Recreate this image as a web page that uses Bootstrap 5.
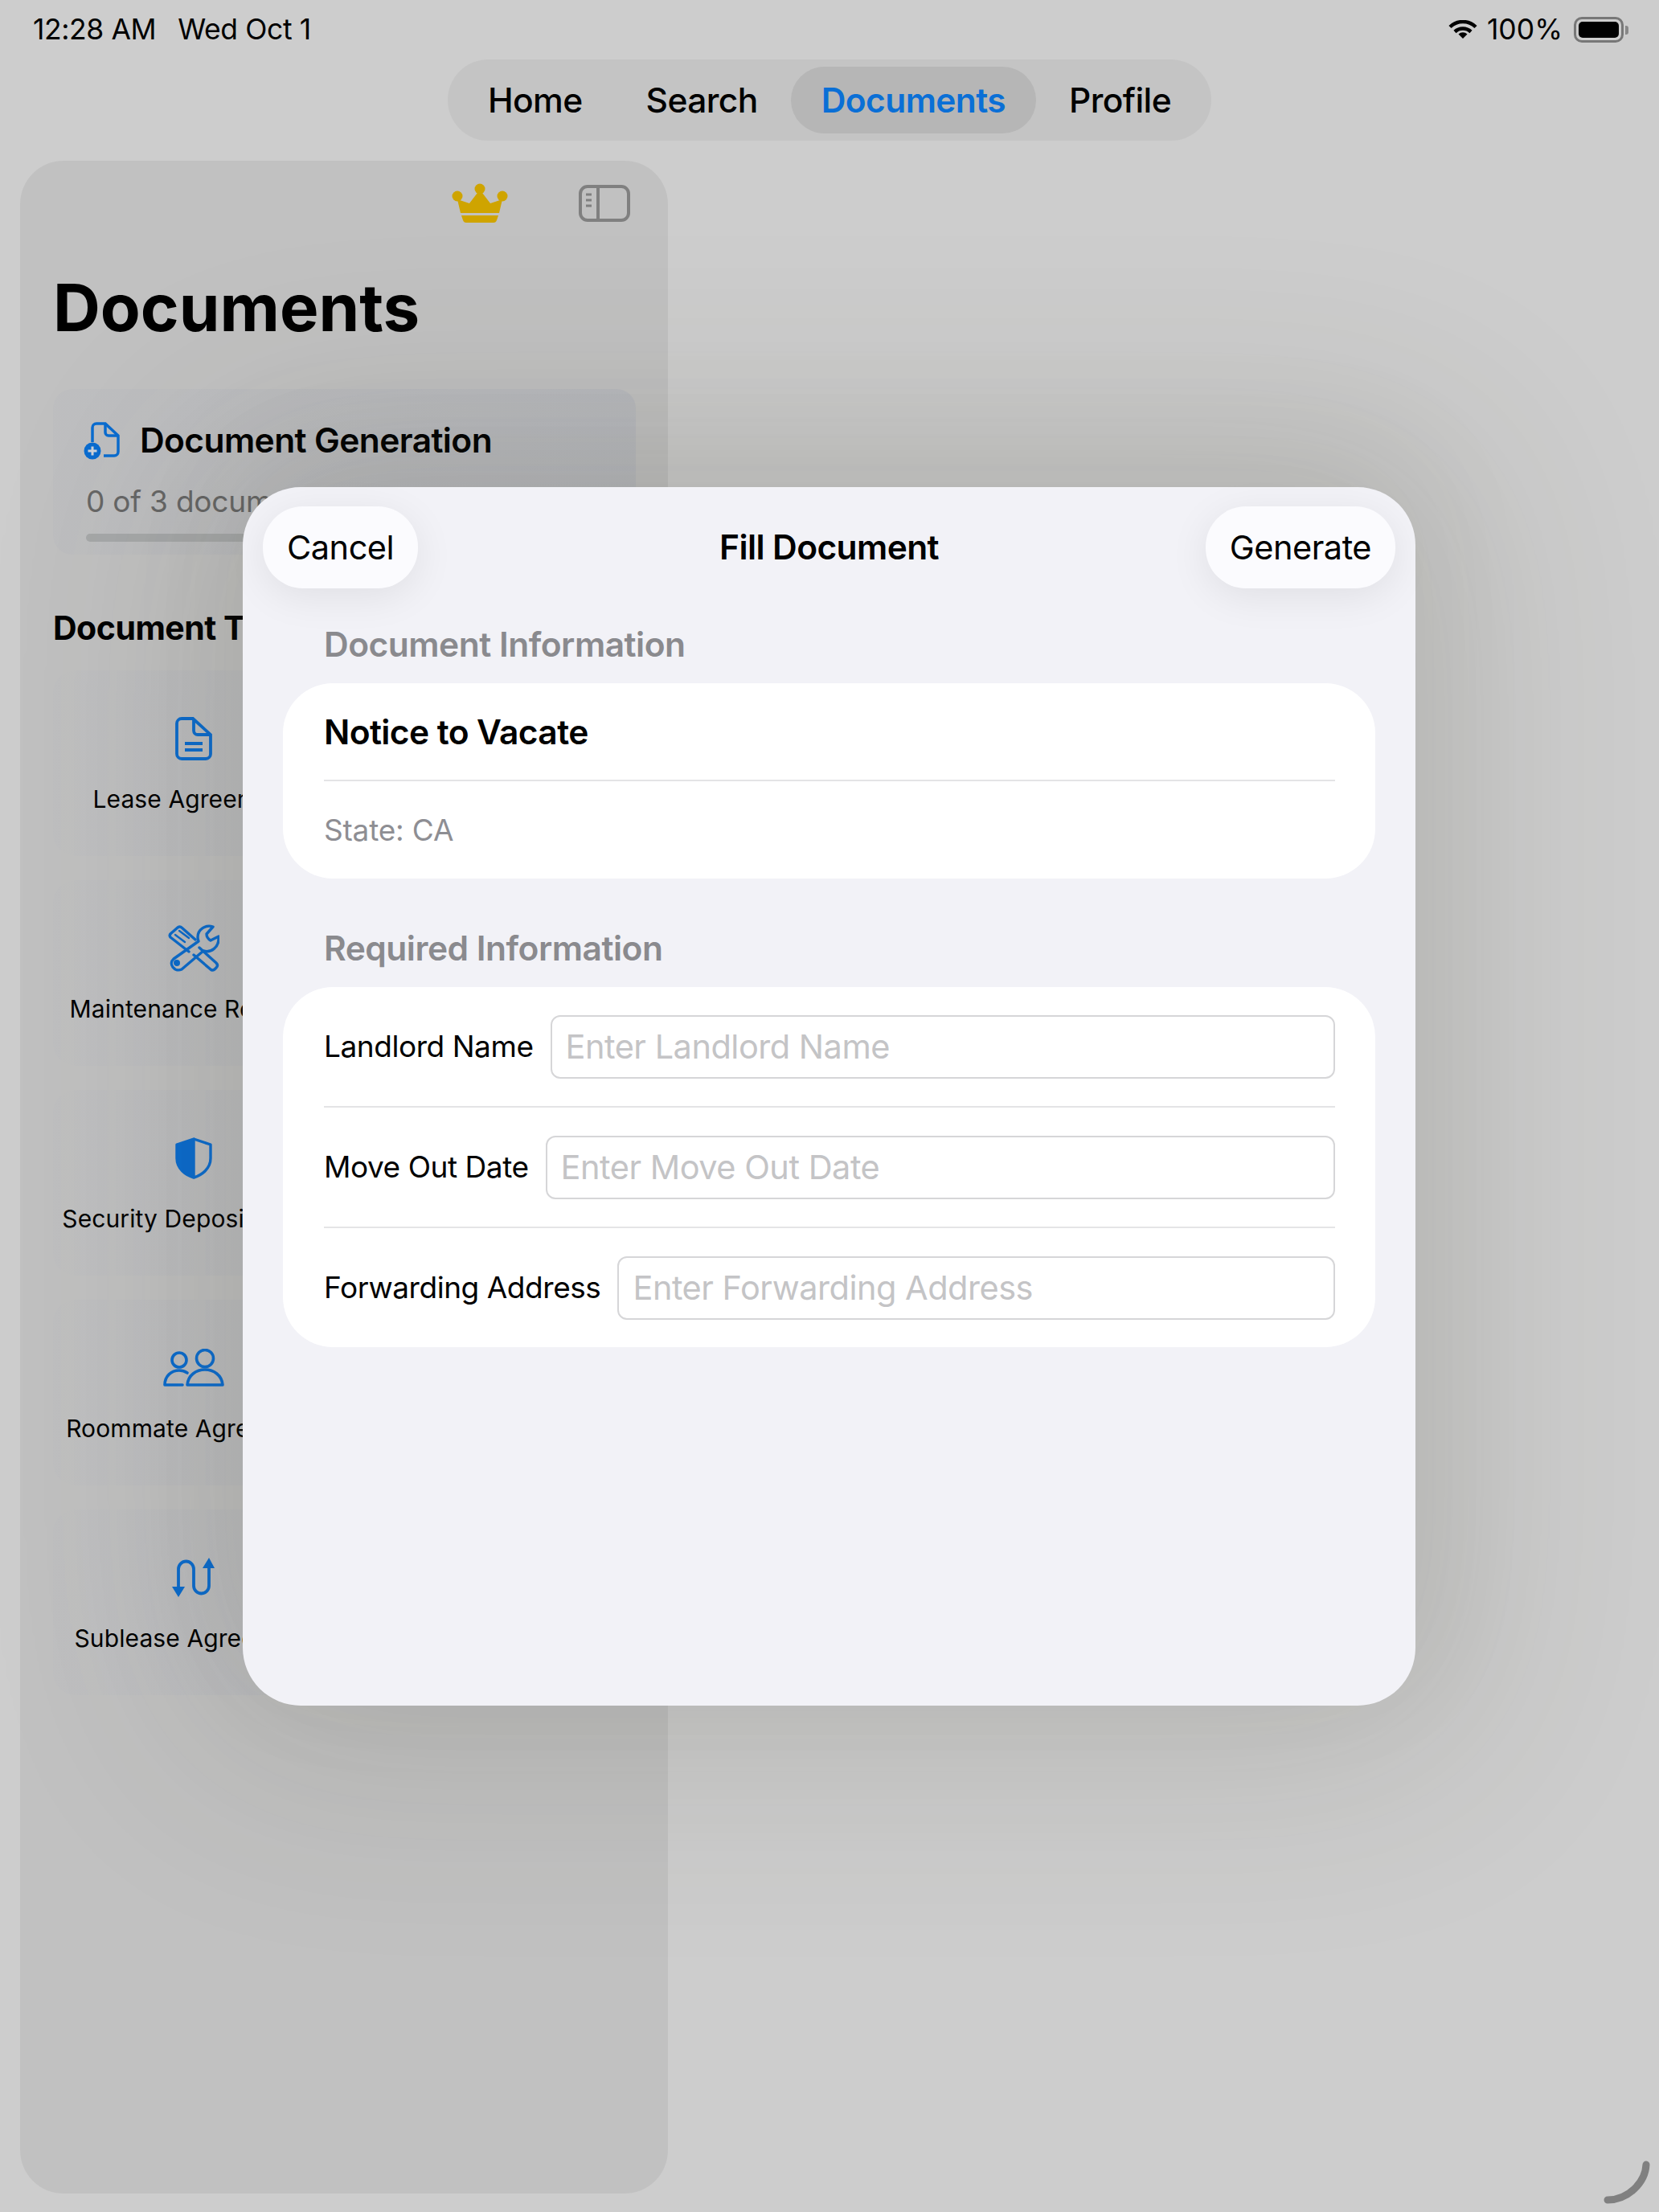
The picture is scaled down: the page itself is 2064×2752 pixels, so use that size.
<!DOCTYPE html>
<html lang="en">
<head>
    <meta charset="UTF-8">
    <meta name="viewport" content="width=device-width, initial-scale=1.0">
    <title>Fill Document</title>
    <link href="https://cdn.jsdelivr.net/npm/bootstrap@5.3.3/dist/css/bootstrap.min.css" rel="stylesheet">
    <style>
        body { background: #cdcdcd; font-family: Inter, "Liberation Sans", sans-serif; color: #000; }
        svg { display: block; flex: none; }

        .screen { width: 2064px; height: 2752px; position: relative; overflow: hidden; background: #cdcdcd; }

        .status-row { height: 74px; padding: 0 38px 0 41px; font-size: 35.500px; line-height: 40px; letter-spacing: -.4px; }
        .status-row .when { gap: 27px; }
        .status-pct { margin: 0 14px 0 12px; letter-spacing: 0; }
        .battery { width: 62px; height: 32px; border: 3px solid #777; border-radius: 10px; padding: 3px; }
        .battery span { display: block; height: 100%; background: #000; border-radius: 5px; }
        .battery-nub { width: 4px; height: 11px; background: #888; border-radius: 0 3px 3px 0; margin-left: 2px; }

        .tab-strip { height: 101px; padding: 9px 12px; background: #c4c4c4; gap: 3px; }
        .tab-strip .nav-link { height: 83px; padding: 0 38px; font-size: 42.500px; font-weight: 500; color: #000; letter-spacing: -.6px; border-radius: 42px; display: flex; align-items: center; }
        .tab-strip .nav-link.active { background: #b6b6b6; color: #0a6fd6; font-weight: 600; }

        .side-panel { width: 806px; height: 2529px; margin: 25px 0 0 25px; background: rgba(0,0,0,.055); border-radius: 54px; padding: 28px 40px 0 41px; }
        .side-tools { gap: 88px; padding-right: 7px; height: 50px; }
        .page-title { font-size: 81.500px; line-height: 90px; font-weight: 700; margin: 60px 0 0; }

        .gen-tile { height: 206px; margin-top: 56px; background: linear-gradient(90deg, rgba(165,170,185,.1), rgba(165,170,185,.3)); border-radius: 24px; padding: 40px 40px 0 36px; }
        .gen-tile h3 { font-size: 42.500px; font-weight: 600; letter-spacing: -.6px; margin: 0; line-height: 48px; }
        .gen-tile p { font-size: 37px; line-height: 44px; color: #666; margin: 30px 0 0 5px; letter-spacing: -.2px; }
        .gen-bar { height: 10px; margin: 18px 0 0 5px; background: #a6a8a9; border-radius: 5px; }

        .types-title { font-size: 41px; font-weight: 700; letter-spacing: -.5px; line-height: 48px; margin: 67px 0 0; }

        .type-list { margin-top: 29px; width: 350px; gap: 30px; }
        .type-tile { height: 231px; background: linear-gradient(90deg, rgba(165,170,190,.05), rgba(165,170,190,.18)); border-radius: 28px; padding-top: 55px; }
        .type-tile .ico { height: 60px; }
        .type-tile span { font-size: 30px; line-height: 36px; margin-top: 27px; white-space: nowrap; letter-spacing: .1px; }

        .sheet { position: absolute; left: 302px; top: 606px; width: 1459px; height: 1516px; background: #f2f2f7; border-radius: 72px; box-shadow: 0 0 300px 80px rgba(60,65,50,.13), 0 -40px 160px rgba(70,75,60,.07); padding: 24px 25px 0; }
        .sheet-head { height: 102px; }
        .sheet-side { flex: 1 1 0; }
        .sheet-head h2 { font-size: 42.500px; font-weight: 600; letter-spacing: -.6px; margin: 0 0 2px; }
        .sheet-btn { height: 102px; padding: 0 30px; background: #fbfbfe; border: 0; border-radius: 50px; font-size: 41.500px; letter-spacing: -.5px; color: #000; box-shadow: 0 10px 50px rgba(0,0,0,.08); }

        .group-label { font-size: 42.500px; line-height: 48px; font-weight: 600; color: #8a8a8e; letter-spacing: -.5px; margin: 46px 0 0 76px; }
        .group-label.second { margin-top: 63px; }
        .group-card { margin: 24px 25px 0; background: #fff; border: 0; border-radius: 62px; padding: 0 50px 0 51px; }
        .rule { height: 2px; background: #e4e4e6; }
        .doc-name { height: 120px; font-size: 42.500px; font-weight: 600; letter-spacing: -.6px; padding-top: 2px; }
        .doc-state { height: 121px; font-size: 37px; color: #8e8e93; letter-spacing: -.2px; }

        .field-row { height: 148px; gap: 21px; font-size: 37px; letter-spacing: -.45px; white-space: nowrap; }
        .field-row .form-control { height: 79px; font-size: 41.500px; padding: 0 17px; border: 2px solid #d6d6d8; border-radius: 12px; letter-spacing: -.5px; }
        .field-row .form-control::placeholder { color: #c4c4c6; opacity: 1; }

        .spin-arc { position: absolute; left: 1990px; top: 2685px; }
    </style>
</head>
<body>
<div class="screen">

    <div class="status-row d-flex justify-content-between align-items-center">
        <div class="when d-flex"><span>12:28 AM</span><span>Wed Oct 1</span></div>
        <div class="d-flex align-items-center">
            <svg width="36" height="24" viewBox="0 0 36 24" fill="none" stroke="#000" stroke-width="4.5">
                <path d="M2 8.500a23 23 0 0 1 32 0"/>
                <path d="M8 14.500a14.500 14.500 0 0 1 20 0"/>
                <path d="M18 23l-5.500-5.500a8 8 0 0 1 11 0z" fill="#000" stroke="none"/>
            </svg>
            <span class="status-pct">100%</span>
            <div class="battery"><span></span></div>
            <div class="battery-nub"></div>
        </div>
    </div>

    <div class="d-flex justify-content-center">
        <ul class="nav nav-pills tab-strip rounded-pill">
            <li class="nav-item"><a class="nav-link" href="#">Home</a></li>
            <li class="nav-item"><a class="nav-link" href="#">Search</a></li>
            <li class="nav-item"><a class="nav-link active" href="#">Documents</a></li>
            <li class="nav-item"><a class="nav-link" href="#">Profile</a></li>
        </ul>
    </div>

    <aside class="side-panel">
        <div class="side-tools d-flex justify-content-end align-items-center">
            <svg width="70" height="50" viewBox="0 0 70 50" fill="#cfa400">
                <circle cx="7" cy="16" r="6.500"/><circle cx="35" cy="7" r="6.500"/><circle cx="63" cy="16" r="6.500"/>
                <path d="M7 20l15 5L35 8l13 17 15-5-4 17H11z"/>
                <path d="M12 40h46l-2 6q-1 3-4 3H18q-3 0-4-3z"/>
            </svg>
            <svg width="64" height="46" viewBox="0 0 64 46" fill="none" stroke="#808080" stroke-width="4">
                <rect x="2" y="2" width="60" height="42" rx="9"/>
                <path d="M24 2v42"/>
                <path d="M9 12h7M9 19h7M9 26h7" stroke-width="3"/>
            </svg>
        </div>

        <h1 class="page-title">Documents</h1>

        <div class="gen-tile">
            <div class="d-flex align-items-center gap-4">
                <svg width="48" height="48" viewBox="0 0 48 48" fill="none" stroke="#0a6cd0" stroke-width="3.5">
                    <path d="M13 26V8a5 5 0 0 1 5-5h11l16 15v20a5 5 0 0 1-5 5H27"/>
                    <path d="M29 3v11a4 4 0 0 0 4 4h12"/>
                    <circle cx="13" cy="37" r="10.500" fill="#0a6cd0" stroke="none"/>
                    <path d="M13 31.500v11M7.500 37h11" stroke="#cfd3da" stroke-width="3"/>
                </svg>
                <h3>Document Generation</h3>
            </div>
            <p>0 of 3 documents used</p>
            <div class="gen-bar"></div>
        </div>

        <h4 class="types-title">Document Types</h4>

        <div class="type-list d-flex flex-column">
            <div class="type-tile d-flex flex-column align-items-center">
                <div class="ico d-flex align-items-center">
                    <svg width="46" height="54" viewBox="0 0 46 54" fill="none" stroke="#0a6cd0" stroke-width="3.8">
                        <path d="M8 2h14l22 20v24a6 6 0 0 1-6 6H8a6 6 0 0 1-6-6V8a6 6 0 0 1 6-6z"/>
                        <path d="M23 2v15a5 5 0 0 0 5 5h16"/>
                        <path d="M12 33h22M12 41h22"/>
                    </svg>
                </div>
                <span>Lease Agreement</span>
            </div>
            <div class="type-tile d-flex flex-column align-items-center">
                <div class="ico d-flex align-items-center">
                    <svg width="64" height="60" viewBox="0 0 64 60" fill="none" stroke="#0a6cd0" stroke-width="3.4" stroke-linejoin="round" stroke-linecap="round">
                        <path d="M26 34L3 16q-2-3 1-5l8-7q3-2 5 0l17 15"/>
                        <path d="M9 13l12 9M14 8l12 9" stroke-width="2.4"/>
                        <path d="M39 29l21 19q3 3 0 6l-2 2q-3 2-5 0L32 38"/>
                        <path d="M56 3c-9-3-19 3-19 13 0 2 .5 4 1 5L7 43c-7 6 1 17 10 13l27-23c10 3 19-5 19-15v-3l-10 5q-5-3-5-8z"/>
                        <circle cx="11" cy="48" r="2.300" fill="#0a6cd0"/>
                    </svg>
                </div>
                <span>Maintenance Request</span>
            </div>
            <div class="type-tile d-flex flex-column align-items-center">
                <div class="ico d-flex align-items-center">
                    <svg width="46" height="52" viewBox="0 0 46 52" fill="none" stroke="#0a6cd0" stroke-width="3.4" stroke-linejoin="round">
                        <path d="M23 2v48C13 47 2 39 2 26V9z" fill="#0a6cd0"/>
                        <path d="M23 2l21 7v17c0 13-11 21-21 24"/>
                    </svg>
                </div>
                <span>Security Deposit Letter</span>
            </div>
            <div class="type-tile d-flex flex-column align-items-center">
                <div class="ico d-flex align-items-center">
                    <svg width="76" height="48" viewBox="0 0 76 48" fill="none" stroke="#0a6cd0" stroke-width="3.6" stroke-linejoin="round" stroke-linecap="round">
                        <circle cx="52" cy="12" r="10.500"/>
                        <circle cx="20" cy="14" r="9"/>
                        <path d="M30 45c1-12 11-19 22-19s21 7 22 19z"/>
                        <path d="M30 30c-3-2-7-3-10-3C10 27 2 34 2 45h22"/>
                    </svg>
                </div>
                <span>Roommate Agreement</span>
            </div>
            <div class="type-tile d-flex flex-column align-items-center">
                <div class="ico d-flex align-items-center">
                    <svg width="54" height="50" viewBox="0 0 54 50" fill="none" stroke="#0a6cd0" stroke-width="3.8">
                        <path d="M8 38V14a9.500 9.500 0 0 1 19 0v21a9.500 9.500 0 0 0 19 0V8"/>
                        <path d="M0 36h16L8 49zM38 13h15L46 0z" fill="#0a6cd0" stroke="none"/>
                    </svg>
                </div>
                <span>Sublease Agreement</span>
            </div>
        </div>
    </aside>

    <section class="sheet">
        <div class="sheet-head d-flex align-items-center">
            <div class="sheet-side d-flex"><button class="btn sheet-btn">Cancel</button></div>
            <h2>Fill Document</h2>
            <div class="sheet-side d-flex justify-content-end"><button class="btn sheet-btn">Generate</button></div>
        </div>

        <div class="group-label">Document Information</div>
        <div class="card group-card">
            <div class="doc-name d-flex align-items-center">Notice to Vacate</div>
            <div class="rule"></div>
            <div class="doc-state d-flex align-items-center">State: CA</div>
        </div>

        <div class="group-label second">Required Information</div>
        <div class="card group-card">
            <div class="field-row d-flex align-items-center">
                <label for="landlord">Landlord Name</label>
                <input id="landlord" class="form-control" placeholder="Enter Landlord Name">
            </div>
            <div class="rule"></div>
            <div class="field-row d-flex align-items-center">
                <label for="moveout">Move Out Date</label>
                <input id="moveout" class="form-control" placeholder="Enter Move Out Date">
            </div>
            <div class="rule"></div>
            <div class="field-row d-flex align-items-center">
                <label for="forward">Forwarding Address</label>
                <input id="forward" class="form-control" placeholder="Enter Forwarding Address">
            </div>
        </div>
    </section>

    <svg class="spin-arc" width="70" height="60" viewBox="0 0 70 60" fill="none" stroke="#808080" stroke-width="9" stroke-linecap="round">
        <path d="M58 8C57 30 36 52 10 52"/>
    </svg>
</div>

<script src="https://cdn.jsdelivr.net/npm/bootstrap@5.3.3/dist/js/bootstrap.bundle.min.js"></script>
</body>
</html>
